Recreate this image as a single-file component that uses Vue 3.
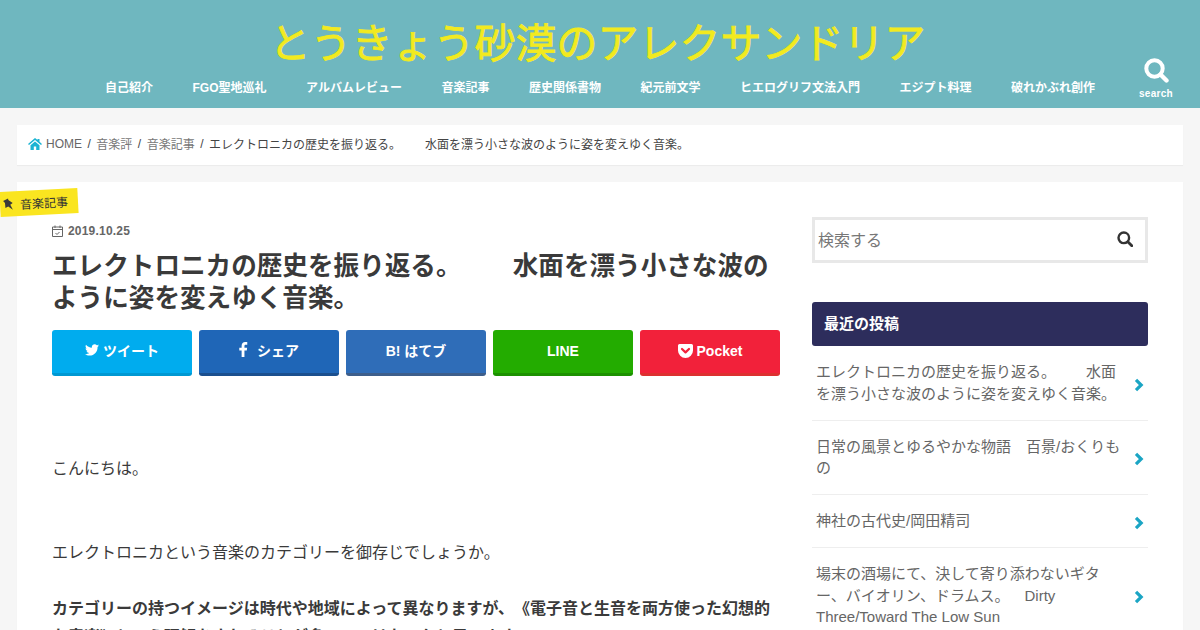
<script setup>
const nav = ['自己紹介','FGO聖地巡礼','アルバムレビュー','音楽記事','歴史関係書物','紀元前文学','ヒエログリフ文法入門','エジプト料理','破れかぶれ創作']
const posts = [
  'エレクトロニカの歴史を振り返る。　　水面を漂う小さな波のように姿を変えゆく音楽。',
  '日常の風景とゆるやかな物語　百景/おくりもの',
  '神社の古代史/岡田精司',
  '場末の酒場にて、決して寄り添わないギター、バイオリン、ドラムス。　Dirty Three/Toward The Low Sun'
]
</script>

<template>
  <div class="page">
    <header class="hdr">
      <div class="hdr-inner">
        <div class="title">とうきょう砂漠のアレクサンドリア</div>
        <nav class="nav"><a v-for="n in nav" :key="n">{{ n }}</a></nav>
      </div>
      <div class="srch">
        <svg width="26" height="26" viewBox="0 0 26 26"><circle cx="11.5" cy="11.5" r="8.2" fill="none" stroke="#fff" stroke-width="4"/><path d="M17.5 17.5L23.5 23.5" stroke="#fff" stroke-width="4.4" stroke-linecap="round"/></svg>
        <span>search</span>
      </div>
    </header>

    <div class="crumbs">
      <svg class="home" width="14" height="12" viewBox="0 0 14 12"><path d="M7 0L0 6l1 1 6-5 6 5 1-1-2.500-2.200V1h-2v1.100z M2.500 7.200V12h3.300V8.500h2.400V12h3.300V7.200L7 3.400z" fill="#1bb4d3"/></svg>
      <span class="c hm">HOME</span><i>/</i><span class="c">音楽評</span><i>/</i><span class="c">音楽記事</span><i>/</i><span class="d">エレクトロニカの歴史を振り返る。　　水面を漂う小さな波のように姿を変えゆく音楽。</span>
    </div>

    <div class="card">
      <div class="tag">
        <svg class="pin" width="12" height="14" viewBox="0 0 12 14"><path d="M3.500 0.500L9 1.500 8.200 3 9.800 8 6.800 8 5.800 13.500 4.200 8 1 7.500 3.800 3.200z" fill="#3a3a3a"/></svg>
        <span>音楽記事</span>
      </div>
      <main class="main">
        <div class="date">
          <svg width="11" height="12" viewBox="0 0 11 12"><path d="M.5 2h10v9.500H.5z M.5 4.500h10 M3 .5v2.500 M8 .5v2.500 M3.500 8l1.500 1.500 2.500-2.500" fill="none" stroke="#666" stroke-width="1"/></svg>
          <span>2019.10.25</span>
        </div>
        <h1>エレクトロニカの歴史を振り返る。　　水面を漂う小さな波のように姿を変えゆく音楽。</h1>
        <div class="share">
          <a class="b tw"><svg width="14" height="12" viewBox="0 0 24 20"><path d="M24 2.400c-.9.400-1.800.7-2.800.8 1-.6 1.800-1.600 2.200-2.700-1 .6-2 1-3.100 1.200C19.300.7 18 0 16.600 0c-2.700 0-4.900 2.200-4.900 4.900 0 .4 0 .8.100 1.100C7.700 5.800 4.100 3.800 1.700.9c-.4.700-.7 1.600-.7 2.500 0 1.700.9 3.200 2.200 4.100-.8 0-1.600-.2-2.200-.6v.1c0 2.400 1.700 4.400 3.900 4.800-.7.200-1.500.2-2.200.1.600 2 2.400 3.400 4.600 3.400C5.600 16.400 3 17.400.1 17.400H0c2.200 1.400 4.800 2.200 7.500 2.200 9.100 0 14-7.500 14-14v-.6c1-.7 1.800-1.600 2.500-2.600z" fill="#fff"/></svg><span>ツイート</span></a>
          <a class="b fb"><svg class="f" width="9" height="15" viewBox="0 0 9 16"><path d="M2.500 16V9H0V6h2.500V4c0-2.600 1.500-4 3.800-4 1 0 2 .1 2.200.1v2.700H7c-1.200 0-1.500.6-1.500 1.400V6h2.900l-.4 3H5.500v7z" fill="#fff"/></svg><span>シェア</span></a>
          <a class="b hb"><span>B! はてブ</span></a>
          <a class="b ln"><span>LINE</span></a>
          <a class="b pk"><svg width="15" height="14" viewBox="0 0 15 14"><path d="M1.500 0h12A1.500 1.500 0 0 1 15 1.500V6.500a7.500 7.500 0 0 1-15 0V1.500A1.500 1.500 0 0 1 1.500 0z" fill="#fff"/><path d="M4 5l3.500 3.400L11 5" fill="none" stroke="#f2213a" stroke-width="2.200" stroke-linecap="round" stroke-linejoin="round"/></svg><span>Pocket</span></a>
        </div>
        <div class="body">
          <p class="p1">こんにちは。</p>
          <p class="p2">エレクトロニカという音楽のカテゴリーを御存じでしょうか。</p>
          <p class="p3"><b>カテゴリーの持つイメージは時代や地域によって異なりますが、《電子音と生音を両方使った幻想的な音楽》という理解をされることが多いのではないかと思います。</b></p>
        </div>
      </main>
      <aside class="side">
        <div class="sbox">
          <span>検索する</span>
          <svg width="16" height="16" viewBox="0 0 16 16"><circle cx="6.800" cy="6.800" r="5.300" fill="none" stroke="#333" stroke-width="2.400"/><path d="M10.800 10.800L14.800 14.800" stroke="#333" stroke-width="2.800" stroke-linecap="round"/></svg>
        </div>
        <h4>最近の投稿</h4>
        <ul>
          <li v-for="p in posts" :key="p">
            <span class="t">{{ p }}</span>
            <svg class="chev" width="10" height="14" viewBox="0 0 10 14"><path d="M2 1.800l5.200 5.200-5.200 5.200" fill="none" stroke="#1ba5c4" stroke-width="3.200"/></svg>
          </li>
        </ul>
      </aside>
    </div>
  </div>
</template>

<style>
html, body { margin: 0; background: #f6f6f6; overflow: hidden; }
</style>

<style scoped>
.page { width: 1200px; height: 630px; overflow: hidden; background: #f6f6f6; font-family: "Liberation Sans", "Noto Sans CJK JP", sans-serif; color: #3a3a3a; text-spacing-trim: space-all; }
a { display: block; }
.hdr { height: 108px; background: #6fb7bf; display: flex; position: relative; }
.hdr-inner { width: 1200px; display: flex; flex-direction: column; align-items: center; }
.title { margin: 18px 5px 0 0; height: 52px; line-height: 52px; font-size: 41px; color: #f2ea1f; -webkit-text-stroke: 0.8px #f2ea1f; white-space: nowrap; }
.nav { display: flex; margin-top: 9px; font-size: 12px; line-height: 18px; font-weight: bold; color: #fff; gap: 39.500px; }
.srch { position: absolute; left: 1130px; top: 57px; width: 52px; display: flex; flex-direction: column; align-items: center; color: #fff; }
.srch span { font: bold 10px/12px "Liberation Sans", sans-serif; letter-spacing: .3px; margin-top: 5px; }
.crumbs { margin: 17px 17px 0; width: 1166px; box-sizing: border-box; height: 40px; background: #fff; box-shadow: 0 1px 1px rgba(0,0,0,.04); display: flex; align-items: center; padding: 0 0 3px 11px; font-size: 12px; color: #555; white-space: nowrap; }
.home { margin-right: 4px; }
.crumbs i { font-style: normal; margin: 0 5.500px; color: #444; }
.c { color: #777; }
.hm { color: #666; }
.d { color: #444; }
.card { margin: 17px 17px 0; width: 1166px; height: 460px; background: #fff; box-shadow: 0 1px 1px rgba(0,0,0,.04); position: relative; display: flex; }
.tag { position: absolute; left: -17px; top: 8px; width: 78px; height: 25px; background: #fae520; transform: rotate(-3deg); display: flex; align-items: center; gap: 5px; padding-left: 3px; box-sizing: border-box; font-size: 12px; color: #333; }
.pin { transform: rotate(-35deg); }
.main { width: 728px; margin-left: 35px; padding-top: 41px; }
.date { display: flex; align-items: center; gap: 5px; font: bold 12px/16px "Liberation Sans", sans-serif; letter-spacing: .2px; color: #666; }
h1 { margin: 11px 0 0; font-size: 25.600px; line-height: 32px; font-weight: bold; color: #3a3a3a; }
.share { display: flex; gap: 7px; margin-top: 16px; }
.b { width: 140px; height: 46px; box-sizing: border-box; border-radius: 3px; display: flex; align-items: center; justify-content: center; gap: 4px; color: #fff; font-size: 14px; font-weight: bold; padding-bottom: 4px; }
.tw { background: #00acee; border-bottom: 3px solid #0098d2; }
.fb { background: #1f66b7; border-bottom: 3px solid #1b4f8e; }
.fb .f { margin-right: 5px; }
.hb { background: #2f6db8; border-bottom: 3px solid #3d5e8b; }
.ln { background: #23ac00; border-bottom: 3px solid #1c9100; padding-bottom: 2px; }
.pk { background: #f2213a; border-bottom: 3px solid #dd3030; padding-bottom: 2px; }
.body { font-size: 16px; line-height: 28px; color: #3a3a3a; }
.body p { margin: 0; }
.p1 { margin-top: 79px !important; }
.p2 { margin-top: 56px !important; }
.p3 { margin-top: 28px !important; }
.side { width: 336px; margin-left: 32px; padding-top: 35px; }
.sbox { height: 46px; box-sizing: border-box; border: 3px solid #e8e8e8; display: flex; align-items: center; justify-content: space-between; padding: 0 12px 2px 3px; font-size: 16px; color: #777; }
h4 { margin: 39px 0 0; height: 44px; line-height: 44px; background: #2d2d5c; color: #fff; border-radius: 3px; font-size: 15px; padding-left: 12px; }
ul { list-style: none; margin: 0; padding: 0; }
li { display: flex; align-items: center; justify-content: space-between; padding: 15px 4px; border-bottom: 1px solid #eee; font-size: 15px; line-height: 21.750px; color: #666; }
.t { width: 306px; }
.chev { margin-top: 4px; }
</style>
